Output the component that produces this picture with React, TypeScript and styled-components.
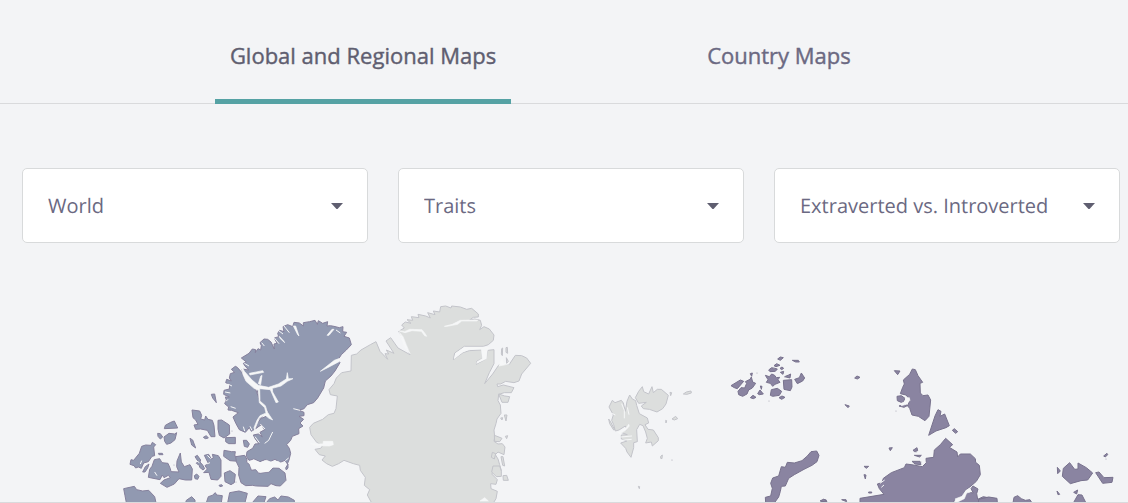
import React from "react";
import styled, { createGlobalStyle } from "styled-components";

const GlobalStyle = createGlobalStyle`
  *, *::before, *::after { box-sizing: border-box; }
  body {
    margin: 0;
    background: #f3f4f6;
    color: #5f5e74;
    font-family: "Open Sans", "Noto Sans", sans-serif;
  }
`;

const TabBar = styled.nav`
  border-bottom: 1px solid #d9dadc;
  padding: 0 8px 0 22px;
`;

const TabList = styled.div`
  display: grid;
  grid-template-columns: 1fr 1fr;
  justify-items: center;
  max-width: 832px;
  margin: 0 auto -1px;
`;

const Tab = styled.button<{ $active?: boolean }>`
  height: 104px;
  padding: 10px 15px 0;
  border: 0;
  border-bottom: 5px solid ${(p) => (p.$active ? "#55a2a4" : "transparent")};
  background: none;
  color: ${(p) => (p.$active ? "#5f5e70" : "#6b6982")};
  font: 500 22px/32px "Open Sans", "Noto Sans", sans-serif;
  -webkit-text-stroke: 0.4px currentColor;
  white-space: nowrap;
  cursor: pointer;
`;

const Filters = styled.form`
  display: grid;
  grid-template-columns: repeat(3, minmax(0, 1fr));
  gap: 30px;
  padding: 64px 8px 57px 22px;
`;

const Field = styled.label`
  display: grid;
  align-items: center;
  & > * { grid-area: 1 / 1; }
`;

const Select = styled.select`
  appearance: none;
  width: 100%;
  height: 75px;
  padding: 0 48px 0 25px;
  border: 1px solid #d8dadb;
  border-radius: 5px;
  background: #fff;
  color: #6b6982;
  font: 400 20px/28px "Open Sans", "Noto Sans", sans-serif;
  text-rendering: geometricPrecision;
`;

const Caret = styled.svg`
  justify-self: end;
  width: 12px;
  height: 6px;
  margin-right: 25px;
  fill: #5f5e70;
  pointer-events: none;
`;

const MapFrame = styled.section`
  border-bottom: 1px solid #d9dadc;
`;

const MapDrawing = styled.svg`
  display: block;
  width: 100%;
  height: auto;
  overflow: hidden;
  stroke-linejoin: round;
  stroke-width: 3;
`;

const filters = [
  { label: "Region", options: ["World", "Europe", "Asia"] },
  { label: "Category", options: ["Traits", "Types"] },
  { label: "Trait", options: ["Extraverted vs. Introverted", "Intuitive vs. Observant"] },
];

type Region = { name: string; x: number; y: number; fill: string; stroke: string; land: string[]; water?: string[]; inlets?: string };

const blue = { fill: "#9199b1", stroke: "#857f9c" };
const gray = { fill: "#dcdedd", stroke: "#c3c4ca" };
const purple = { fill: "#8a84a1", stroke: "#77718d" };

const regions: Region[] = [
  {
    name: "Arctic Archipelago",
    x: 110,
    y: 310,
    ...blue,
    land: [
      "M41 536L73 529L80 539L98 543L116 541L134 560L138 578H49L45 557Z",
      "M60 463L63 449L71 451L88 430L95 409L107 405L123 406L127 397L137 404L131 411L134 437L126 439L115 455L101 459L94 475L85 471L77 474L72 467Z",
      "M98 486L106 470L117 462L113 474L105 486Z",
      "M115 502L119 478L126 469L133 449L149 446L156 458L174 460L181 476L183 485L207 486L200 470L201 453L211 429L214 456L223 470L240 464L247 477L245 510H226L207 506L193 522L171 532L151 520L162 510L181 503L175 496L162 503L157 495L150 509Z",
      "M143 370L151 371L158 381L151 387L144 379Z",
      "M145 430H157L159 434H147Z",
      "M163 356L166 346L182 337L193 333L203 354Z",
      "M162 381L177 370L194 372L200 368L195 389L183 399L170 403L164 394Z",
      "M240 385L248 390L257 414L245 405Z",
      "M304 253L314 252L319 278L308 264Z",
      "M246 300L269 303L275 316L272 327L284 330L287 318L294 328L307 331L312 346L315 380H303L292 361L272 357L257 358L252 345L264 343L257 330L249 323Z",
      "M280 382L289 377L295 384L286 386Z",
      "M324 331L335 330L358 345L359 372L342 384L328 376L324 357Z",
      "M342 421L365 425L376 425L374 438L389 442L385 454L360 452L341 439Z",
      "M347 383L376 382V401H356L347 395Z",
      "M255 440L262 436L272 450L270 456L278 465L284 476L279 480L269 472L268 466L259 460L264 454Z",
      "M253 497L260 492L267 499L263 508L255 506Z",
      "M283 436L296 433L304 447L310 444L307 433L325 437L333 450V499L323 510L303 508L297 487L281 488L292 477L285 467L295 460Z",
      "M343 489L360 482L376 493L373 518L363 524L345 515Z",
      "M229 571L245 560L255 570L255 578H227Z",
      "M289 578L295 560L307 556L316 548L320 555L337 557L334 578Z",
      "M353 578L359 548L387 543L412 550L405 578Z",
      "M327 526L335 524L338 528L330 530Z",
    ],
    inlets: "M134 486L141 497M95 452L91 462M256 450L268 458M300 458L290 462M292 436L302 446",
  },
  {
    name: "Ellesmere Island",
    x: 210,
    y: 310,
    ...blue,
    land: [
      "M94 144L117 130L127 117L137 119L136 128L144 116L152 120L154 107L150 98L162 87L173 88L183 96L193 117L192 102L201 100L193 84L206 80L203 70L209 61L222 65L219 50L233 44L248 50L252 37L268 39L280 48L280 38L299 35L315 31L322 43L325 32L338 40L353 35L351 48L361 47L372 49L388 53L399 50L398 65L410 67L402 79L418 84L424 104L409 120L394 134L383 151L390 158L375 183L363 198L346 213L341 234L323 264L311 278L292 284L281 297L265 300L282 307V317L267 319L281 328L270 339L279 348L266 356L267 371L247 379L242 391L230 404L238 415L242 430L237 450L232 462L225 451L210 457L195 448L181 454L165 449L150 455L132 447L117 451L109 439L111 425L128 415L135 402L147 401L136 387L130 375L145 372L157 381L150 367L164 359L154 344L137 356L142 339L154 325L169 319L174 305L164 291L151 276L146 258L141 239L136 231L123 220L108 204L98 187L96 177L116 180L105 168L100 160L109 156Z",
      "M64 178L76 169L82 172L95 187L107 212L128 228L137 239L146 262L150 277L164 291L170 307L160 317L142 333L135 357L124 364L118 353L106 367L88 359L78 341L69 321L85 308L65 301L54 300L56 291L44 281L49 270L46 261L58 261L41 253L42 241L58 237L59 223L47 218L50 208L64 213L58 204L61 191L74 187Z",
      "M77 440L104 436L111 448L110 457L119 464L124 481L137 479L146 490L178 486L189 474L207 475L225 489L228 511L211 528L198 527L183 521L174 529L139 528L127 526L107 527L93 518L86 495L87 472L79 455Z",
      "M100 391L110 391L118 402L113 412L103 409Z",
      "M127 578L144 558L168 560L162 578Z",
      "M169 578L179 566L194 561L204 570L213 558L235 561L253 571V578Z",
      "M227 474L234 462L234 474L229 480Z",
    ],
    water: [
      "M93 165L103 184L126 210L145 226L176 232L205 222L229 207L232 188L235 206H249L232 214L213 228L187 235L188 246L205 276L198 278L181 239L149 236L150 273L166 287L172 306L188 330L177 325L165 315L148 324L134 360L132 353L141 331L150 317L168 309L164 293L148 278L145 241L132 235L108 214L99 194Z",
      "M331 184L373 151L389 145L387 155L353 173Z",
      "M118 190L158 182L161 187L120 195Z",
      "M145 221L152 199L156 196L152 224Z",
      "M250 48L263 74L267 78L257 48Z",
      "M351 76L366 58L372 58L357 76Z",
      "M208 79L221 93L224 98L210 85Z",
      "M119 458L130 449L151 458L170 451L187 458L204 454L216 462L228 459L221 474L205 469L187 471L176 484L151 487L139 475L124 474Z",
    ],
    inlets: "M103 160L117 168M155 98L163 108M193 84L207 101M206 62L219 72M222 48L238 68M53 222L66 228M45 246L61 249M54 268L48 274M62 290L77 295M250 296L270 301M151 342L165 357M188 366L176 391L164 400M120 349L126 361M100 350L104 363M378 60L391 69M135 380L148 398M226 452L236 444",
  },
  {
    name: "Greenland",
    x: 300,
    y: 300,
    ...gray,
    land: [
      "M154 166L170 162L183 150L211 134L228 125L240 154L263 178L255 161L266 162L259 150L282 160L258 123L272 113L294 144L330 164L316 130L296 94L313 84L305 75L316 66L333 70L321 59L338 61L334 50L357 53L354 43L377 48L391 54L383 38L405 44L400 33L419 36L422 20L437 18L453 24L455 18L481 21L500 28L515 25L535 42L535 51L520 52L509 60L524 57L541 61L545 76L539 89L552 80L568 87L582 105L580 121L565 134L550 139H493L464 159L460 179L489 158L508 152L544 150L547 175L530 184L529 193L559 176L563 151L582 149V191L568 218L554 251L578 222L597 194L628 193L646 166L665 167L680 174L692 190L665 222L657 243L642 248L617 244L602 252L591 252L593 260L610 255L642 263L634 278H613L596 283L594 302L601 315L603 340L591 357L588 371L582 390L584 411L582 424L594 432L607 431L615 441L612 464L594 456L586 464L594 477L599 494L604 511L599 529L583 513L575 522L592 539L588 553L572 551L573 566L592 574L588 596L580 609H215L202 585L209 569L193 556L196 532L181 511L179 496L160 491L132 481L116 491L97 499L80 491L66 480L76 468L58 464L45 448L62 445L68 437L50 427L33 404L29 382L40 370L68 358L85 344L102 340L108 326L112 288L91 284L87 269L102 251L109 234L125 218L153 213Z",
    ],
    water: [
      "M32 431L69 432L70 424H98L100 434L88 438L50 437Z",
      "M296 92L314 95L329 88L366 89L376 102L380 109L374 107L364 94L336 92L315 98Z",
      "M433 79L457 73L469 67L481 61L533 60L531 63H485L473 73L441 79Z",
      "M463 176L468 160L493 142H568V147H508L487 157Z",
      "M544 149H562L559 176L530 190L532 185L547 176Z",
      "M298 97L309 110L330 161L313 140Z",
      "M597 198L605 178L611 190L626 186L627 192Z",
      "M540 603L554 593L565 603Z",
    ],
  },
  {
    name: "Greenland coast islands",
    x: 400,
    y: 300,
    ...gray,
    land: [
      "M296 282L314 288L329 290L324 307L306 307Z",
      "M305 146L308 144L307 167L304 162Z",
      "M318 143L322 142L323 160L318 157Z",
      "M319 173L325 184L320 190Z",
      "M283 406L294 410L306 415L299 425L284 424Z",
      "M277 457L287 461L283 477L274 472Z",
      "M303 470L309 470L314 498L308 496Z",
      "M279 498L299 498L304 514L304 529L289 530L275 516Z",
      "M309 527L320 526L325 541H310Z",
      "M302 354L308 353L306 360Z",
      "M313 345L321 345L318 363Z",
      "M316 409L323 407L320 416Z",
    ],
  },
  {
    name: "Svalbard",
    x: 590,
    y: 370,
    ...gray,
    land: [
      "M57 111L67 91L75 98L94 91L100 99L106 124L111 94L119 75L127 87L137 92L140 106L148 131L172 144L176 159L165 164L174 178L190 180L205 203V212L187 228L184 216L167 219L172 205L167 186L159 167L149 163L140 179L142 215L131 218L131 233L123 262L111 246L107 235L92 219L111 213L94 207L94 195L112 194L92 187L110 179L106 168L87 180L76 183L71 164L65 151L70 135Z",
      "M136 83L146 64L157 50L161 65L176 72L186 50L190 68L202 58L214 58L235 76L228 102L218 116L201 126L178 118L160 116L154 108L169 97L146 100Z",
      "M56 147L62 156L74 179L71 180L59 161Z",
      "M280 72L289 66L303 63L304 69L291 73Z",
      "M246 147L257 139L263 146L253 150Z",
      "M240 67L245 68L242 77Z",
      "M227 151L230 152L228 159Z",
      "M212 259L217 255L216 266L212 265Z",
      "M145 349L149 350L148 356Z",
    ],
    water: ["M82 188L94 181L110 172L116 163L118 168L107 181L91 191Z"],
    inlets: "M95 101L103 121V145M65 130L76 135M112 112L117 134M93 201L126 198M94 211L125 208",
  },
  {
    name: "Franz Josef Land and Novaya Zemlya",
    x: 710,
    y: 345,
    ...purple,
    land: [
      "M63 122L91 105L101 109L82 131L73 128Z",
      "M84 139L93 128L104 129L110 115L106 110L120 103L124 96L128 111L137 115L127 129L116 135L111 147L98 154L86 149Z",
      "M121 86L127 84L125 94Z",
      "M121 158L129 151L138 157L130 161Z",
      "M143 146L150 135L160 147L148 149Z",
      "M151 123L156 124L154 133Z",
      "M166 91L178 95L185 87L194 91L199 98L209 97L204 104L210 112L195 118L188 124L181 115L169 112L174 104Z",
      "M176 75L185 68L202 72L196 79L180 80Z",
      "M192 62L200 56L210 61L198 65Z",
      "M203 42L211 36L220 38L211 46Z",
      "M210 70L216 66L221 70L215 74Z",
      "M181 151L184 134L202 130L215 139L208 151L188 154Z",
      "M207 158L216 153L225 157L215 163Z",
      "M220 106L245 104L246 126L241 137L222 133Z",
      "M224 95L236 90L242 87L240 99Z",
      "M247 46L265 46L268 51L257 51Z",
      "M254 103L268 98L274 84L284 99L278 108L262 116Z",
      "M211 82L221 79L219 88Z",
      "M167 474L166 457L182 453L187 430L182 415L188 399L206 393L214 365L226 367L232 352L253 354L276 347L292 333L303 320L320 318L327 331L321 350L306 361L282 373L253 389L236 400L226 423L214 424L211 439L206 456L193 474Z",
      "M336 467L348 464L352 474H333Z",
    ],
  },
  {
    name: "Severnaya Zemlya and Taymyr",
    x: 820,
    y: 355,
    ...purple,
    land: [
      "M250 75L269 58L277 42L286 44L294 62L308 82L300 85L301 114L309 122L324 120L332 135L327 184L315 197L295 184L276 180L269 160L263 153L270 134L258 120L241 116L248 97L253 87Z",
      "M231 124L244 122L255 130L248 144L232 137Z",
      "M237 153L250 149L264 151L252 157Z",
      "M223 47L240 48L233 59Z",
      "M104 69L111 63L120 67L112 72Z",
      "M75 149L88 153L84 158Z",
      "M326 241L345 183L354 164L363 169L360 184L374 177L388 212L378 218L348 228Z",
      "M397 226L403 221L413 230L407 235Z",
      "M120 430L192 418L178 401L172 387L186 383L190 370L214 353L253 338L258 327L281 330L307 335L319 323L318 310L341 307L343 285L361 269L377 250L398 269L388 277L411 291L413 306L421 297L451 297L466 311L467 322L478 331L481 359L469 379L453 393L434 408L430 425L403 435L400 444H120Z",
      "M408 444L432 431L441 411L460 414L453 401L459 393L474 402L470 416L473 433L490 425L513 430V444Z",
      "M279 286L291 278L293 287L284 290Z",
      "M283 301L304 301L299 306Z",
      "M276 319L300 319L303 329L285 327Z",
      "M207 279L217 278L211 287Z",
      "M132 334L146 334L139 340Z",
      "M132 359L138 360L136 372Z",
      "M146 411H155V414H146Z",
      "M0 438L12 432L20 441Z",
      "M65 434L78 434L80 440Z",
    ],
    water: [
      "M243 145L258 139L256 129L268 128L270 136L258 148L244 152Z",
      "M405 432L426 424L438 406L449 400L452 411L440 414L433 431L413 441Z",
    ],
    inlets: "M180 385L194 375M184 397L192 390",
  },
  {
    name: "New Siberian Islands",
    x: 960,
    y: 400,
    ...purple,
    land: [
      "M310 205L329 188L344 208L354 207V189L379 203L398 219L383 240L363 242L331 251L307 229Z",
      "M407 218L417 216L432 233L459 232L456 247L428 250Z",
      "M292 202L301 213L293 221Z",
      "M431 168L441 160L443 164L436 171Z",
      "M291 273L299 283L294 284Z",
      "M341 277L353 270L350 282Z",
      "M340 309L354 284L366 285L378 309Z",
      "M159 309L162 292L173 287L184 296L196 301L210 299L216 309Z",
      "M55 309L56 298L86 291L111 295L112 309Z",
    ],
  },
];

const specks = [
  [672, 460], [757, 373], [774, 368], [785, 377], [769, 401], [232, 431], [236, 482], [174, 465],
  [1106, 459], [921, 462], [916, 452], [896, 411],
];

export default function App() {
  return (
    <>
      <GlobalStyle />
      <TabBar aria-label="Map type">
        <TabList role="tablist">
          <Tab type="button" role="tab" aria-selected="true" $active>Global and Regional Maps</Tab>
          <Tab type="button" role="tab" aria-selected="false">Country Maps</Tab>
        </TabList>
      </TabBar>
      <main>
        <Filters>
          {filters.map(({ label, options }) => (
            <Field key={label}>
              <Select aria-label={label} defaultValue={options[0]}>
                {options.map((option) => <option key={option}>{option}</option>)}
              </Select>
              <Caret viewBox="0 0 12 6" aria-hidden="true">
                <path d="M0 0H12L7 5.5Q6 6.5 5 5.5Z" />
              </Caret>
            </Field>
          ))}
        </Filters>
        <MapFrame>
          <MapDrawing viewBox="0 300 1128 202" role="img" aria-label="World map">
            {regions.map((r) => (
              <g key={r.name} transform={`translate(${r.x} ${r.y}) scale(0.33333)`}>
                <path d={r.land.join("")} fill={r.fill} stroke={r.stroke} />
                {r.water && <path d={r.water.join("")} fill="#f6f7f8" stroke="#f6f7f8" strokeWidth="2" />}
                {r.inlets && <path d={r.inlets} fill="none" stroke="#f6f7f8" />}
              </g>
            ))}
            {specks.map(([x, y]) => (
              <circle key={`${x}-${y}`} cx={x} cy={y} r="0.6" fill="#a7a4b5" />
            ))}
          </MapDrawing>
        </MapFrame>
      </main>
    </>
  );
}
